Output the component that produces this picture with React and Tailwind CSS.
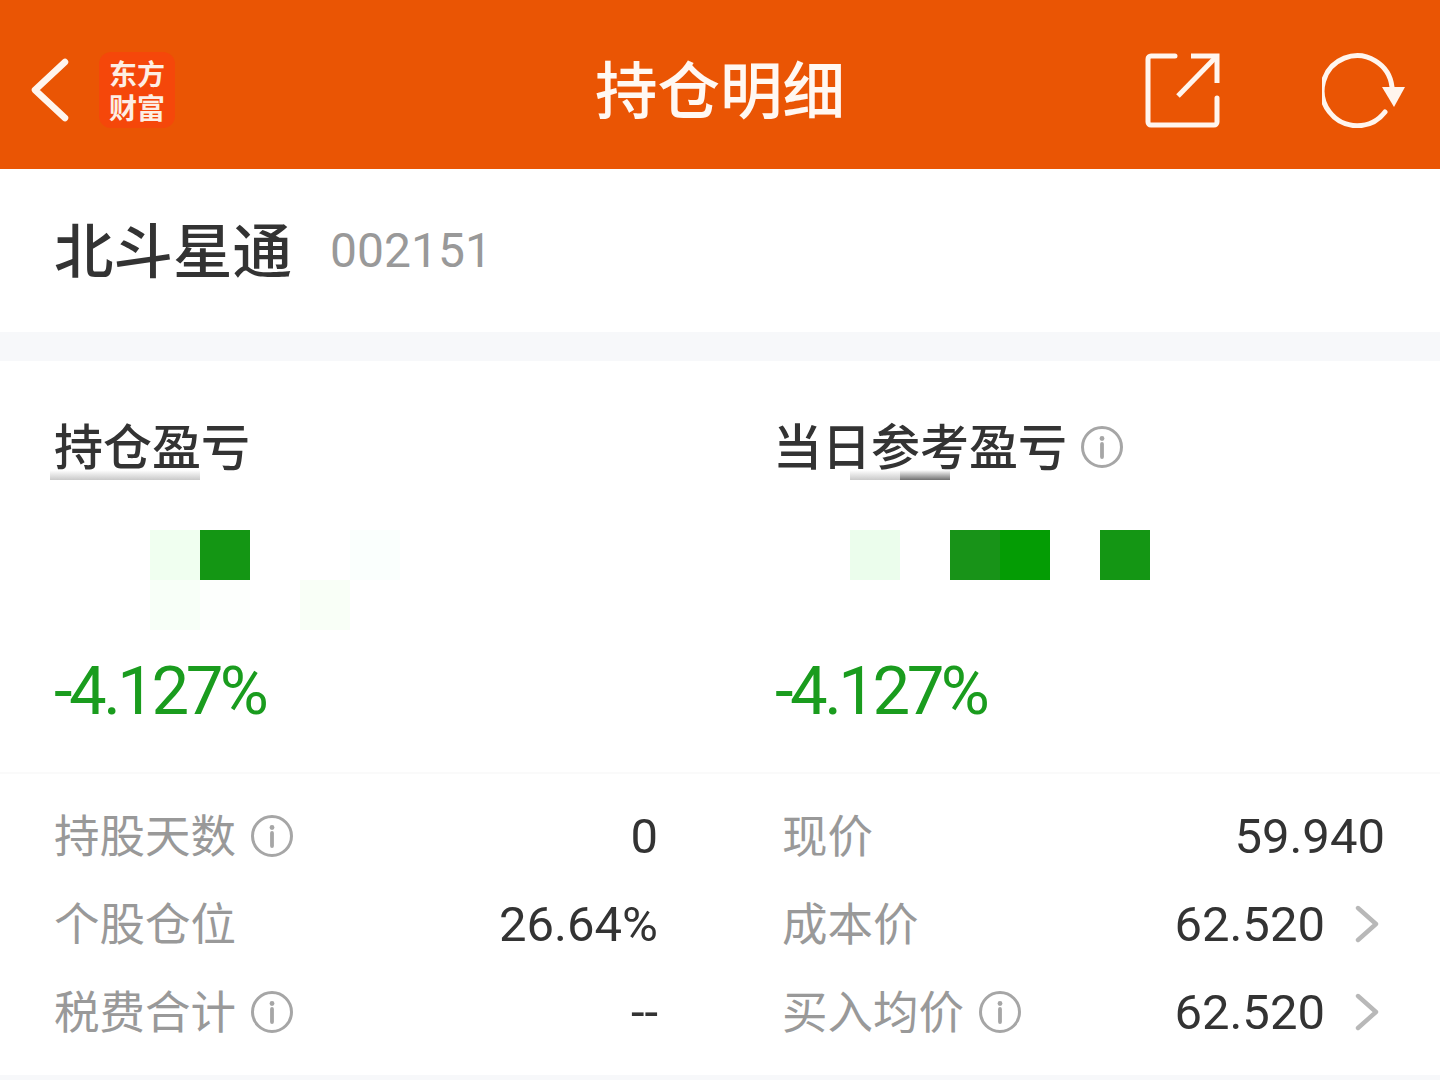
import React from 'react';

const CJK = 'font-["Noto_Sans_CJK_SC","Roboto",sans-serif]';

const InfoIcon = ({ size = 42 }) => (
  <svg width={size} height={size} viewBox="0 0 42 42" fill="none" className="shrink-0">
    <circle cx="21" cy="21" r="19.5" stroke="#a6a6a6" strokeWidth="3" />
    <circle cx="21" cy="12.5" r="2.4" fill="#a6a6a6" />
    <path d="M21 18v13" stroke="#a6a6a6" strokeWidth="3.8" strokeLinecap="round" />
  </svg>
);

const Chevron = () => (
  <svg width="24" height="38" viewBox="0 0 24 38" fill="none" className="shrink-0">
    <path d="M3 3l18 16L3 35" stroke="#b8b8b8" strokeWidth="4.4" strokeLinecap="round" strokeLinejoin="round" />
  </svg>
);

const Cell = ({ color }) => <div className={`w-[50px] h-[50px] ${color}`} />;

const Row = ({ label, info, value, arrow }) => (
  <div className="h-[88px] flex items-center">
    <span className={`mb-[4px] text-[45.5px] leading-none text-[#999999] ${CJK}`}>{label}</span>
    {info && <span className="ml-[15px] flex"><InfoIcon /></span>}
    <span className="ml-auto text-[49px] leading-none text-[#333333] font-['Roboto',sans-serif]">{value}</span>
    {arrow && <span className="ml-[30px] mr-[6px] flex"><Chevron /></span>}
  </div>
);

export default function App() {
  return (
    <div className={`w-[1440px] h-[1080px] overflow-hidden bg-white ${CJK}`}>
      <header className="h-[169px] pt-[11px] bg-[#ea5504] flex items-center">
        <svg width="40" height="66" viewBox="0 0 40 66" fill="none" className="ml-[30px] shrink-0">
          <path d="M35 5L5 33l30 28" stroke="#fff5ee" strokeWidth="6.5" strokeLinecap="round" strokeLinejoin="round" />
        </svg>
        <div className="ml-[29px] w-[76px] h-[76px] rounded-[12px] bg-[#f5470a] flex flex-col items-center justify-center text-[#fdeee4] text-[28px] leading-[34px] font-bold">
          <span>东方</span>
          <span>财富</span>
        </div>
        <h1 className="ml-[420px] mb-[6px] w-[250px] text-[62.5px] leading-none font-medium text-[#fff8f2] whitespace-nowrap">持仓明细</h1>
        <svg width="76" height="76" viewBox="0 0 76 76" fill="none" className="ml-[300px] shrink-0">
          <path d="M30 4H6a3 3 0 0 0-3 3v63a3 3 0 0 0 3 3h63a3 3 0 0 0 3-3V46" stroke="#fff5ee" strokeWidth="5" strokeLinecap="round" />
          <path d="M71 5L33 44" stroke="#fff5ee" strokeWidth="5" />
          <path d="M46 4h26v27" stroke="#fff5ee" strokeWidth="5" />
        </svg>
        <svg width="86" height="76" viewBox="0 0 86 76" fill="none" className="ml-[101px] shrink-0">
          <path d="M63 60A35 35 0 1 1 70 35" stroke="#fff5ee" strokeWidth="5" strokeLinecap="round" />
          <path d="M60 35h23L72 55z" fill="#fff5ee" />
        </svg>
      </header>

      <div className="h-[163px] flex items-center pl-[54px]">
        <span className="mb-[6px] text-[59.5px] leading-none font-medium text-[#333333]">北斗星通</span>
        <span className="ml-[38px] text-[48px] leading-none text-[#999999] font-['Roboto',sans-serif]">002151</span>
      </div>
      <div className="h-[29px] bg-[#f7f8fa]" />

      <section className="h-[413px] flex border-b-2 border-[#fafafa]">
        <div className="w-[720px] pl-[54px] pt-[47px]">
          <h2 className="relative text-[49px] leading-[72px] h-[72px] font-medium text-[#333333]">
            持仓盈亏
            <span className="absolute left-[-4px] bottom-0 w-[150px] h-[10px] bg-gradient-to-b from-white/0 to-[#c9c9c9]" />
          </h2>
          <div className="mt-[50px] ml-[96px] flex">
            <Cell color="bg-[#f0fff0]" />
            <Cell color="bg-[#149614]" />
            <div className="w-[100px]" />
            <Cell color="bg-[#fafffd]" />
          </div>
          <div className="ml-[96px] flex">
            <Cell color="bg-[#f8fff8]" />
            <Cell color="bg-[#fdfffd]" />
            <div className="w-[50px]" />
            <Cell color="bg-[#f9fff7]" />
          </div>
          <div className="mt-[26px] text-[67px] leading-[70px] tracking-[-3.5px] text-[#1a9c1e] font-['Roboto',sans-serif]">-4.127%</div>
        </div>
        <div className="w-[720px] pl-[53px] pt-[47px]">
          <h2 className="relative flex items-center gap-[14px] text-[49px] leading-[72px] h-[72px] font-medium text-[#333333]">
            当日参考盈亏
            <span className="mt-[6px] flex"><InfoIcon /></span>
            <span className="absolute left-[77px] bottom-0 w-[50px] h-[10px] bg-gradient-to-b from-white/0 to-[#c9c9c9]" />
            <span className="absolute left-[127px] bottom-0 w-[50px] h-[10px] bg-gradient-to-b from-white/0 to-[#707070]" />
          </h2>
          <div className="mt-[50px] ml-[77px] flex">
            <Cell color="bg-[#ebfdec]" />
            <div className="w-[50px]" />
            <Cell color="bg-[#189318]" />
            <Cell color="bg-[#049c04]" />
            <div className="w-[50px]" />
            <Cell color="bg-[#149614]" />
          </div>
          <div className="h-[50px]" />
          <div className="mt-[26px] ml-[2px] text-[67px] leading-[70px] tracking-[-3.5px] text-[#1a9c1e] font-['Roboto',sans-serif]">-4.127%</div>
        </div>
      </section>

      <section className="pt-[18px] pl-[54px] flex gap-[124px]">
        <div className="w-[604px] flex flex-col">
          <Row label="持股天数" info value="0" />
          <Row label="个股仓位" value="26.64%" />
          <Row label="税费合计" info value="--" />
        </div>
        <div className="w-[603px] flex flex-col">
          <Row label="现价" value="59.940" />
          <Row label="成本价" value="62.520" arrow />
          <Row label="买入均价" info value="62.520" arrow />
        </div>
      </section>
      <div className="mt-[19px] h-[6px] bg-[#f7f8fa]" />
    </div>
  );
}
